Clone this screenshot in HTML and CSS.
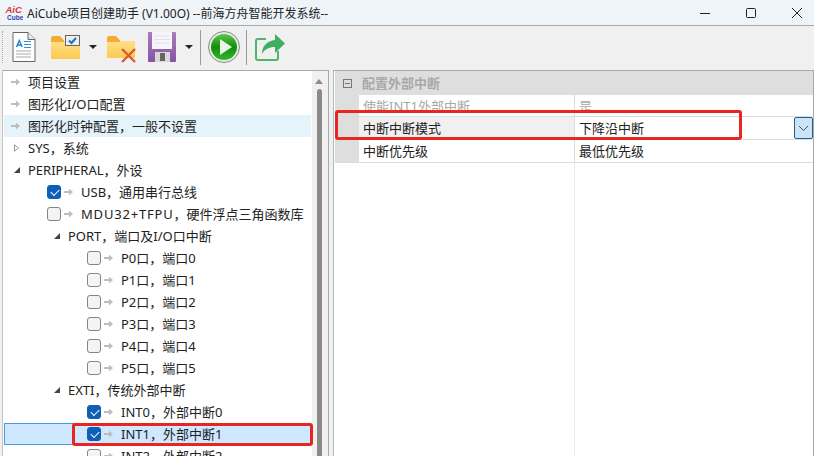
FILE: index.html
```html
<!DOCTYPE html>
<html lang="zh">
<head>
<meta charset="utf-8">
<title>AiCube</title>
<link rel="stylesheet" href="styles.css">
</head>
<body>
<div class="app">
  <header class="titlebar">
    <svg class="logo" width="18" height="18" viewBox="0 0 18 18"><text x="0.500" y="9" class="logo-a">AiC</text><text x="2" y="15.500" class="logo-b">Cube</text></svg>
    <span class="title">AiCube项目创建助手 (V1.00O) --前海方舟智能开发系统--</span>
    <div class="winbtns">
      <svg width="12" height="12" viewBox="0 0 12 12"><path d="M1 6.500h10" stroke="#222" fill="none"/></svg>
      <svg width="12" height="12" viewBox="0 0 12 12"><rect x="1.500" y="1.500" width="9" height="9" rx="1" stroke="#222" fill="none"/></svg>
      <svg width="12" height="12" viewBox="0 0 12 12"><path d="M1 1l10 10M11 1L1 11" stroke="#222" fill="none"/></svg>
    </div>
  </header>

  <div class="toolbar">
    <svg width="0" height="0" class="defs">
      <defs>
        <linearGradient id="fold" x1="0" y1="0" x2="0" y2="1"><stop offset="0" stop-color="#ffe08a"/><stop offset="1" stop-color="#fbc94f"/></linearGradient>
        <linearGradient id="ball" x1="0" y1="0" x2="0" y2="1"><stop offset="0" stop-color="#5cc84a"/><stop offset="0.500" stop-color="#128c0c"/><stop offset="1" stop-color="#35b82a"/></linearGradient>
        <linearGradient id="disk" x1="0" y1="0" x2="0" y2="1"><stop offset="0" stop-color="#a77cc0"/><stop offset="1" stop-color="#85559f"/></linearGradient>
      </defs>
    </svg>
    <div class="grip"></div>
    <svg class="t-doc" width="24" height="30" viewBox="0 0 24 30">
      <path d="M1 .5h15l7 7v22H1z" fill="#fff" stroke="#666"/><path d="M16 .5v7h7" fill="#e8e8e8" stroke="#666"/>
      <path d="M4.500 15l2.800-6.500 2.800 6.500M5.500 13h4" fill="none" stroke="#1f7fd6" stroke-width="1.400"/>
      <path d="M12 9.500h7M12 12.500h7M12 15.500h7" stroke="#3b8fdc"/><path d="M4 19h15M4 22h15M4 25h15" stroke="#a8a8a8"/>
    </svg>
    <svg class="t-folder1" width="29" height="24" viewBox="0 0 29 24">
      <path d="M0 6h29v17a1 1 0 01-1 1H1a1 1 0 01-1-1z" fill="url(#fold)"/><path d="M0 3a2 2 0 012-2h7l4 4.500V7H0z" fill="#f2ac36"/>
      <rect x="14.500" y=".5" width="14" height="10" fill="#eee" stroke="#666"/><path d="M18 5.500l2.500 2.500 4.500-5" stroke="#1a72c4" stroke-width="2" fill="none"/>
    </svg>
    <div class="caret c1"></div>
    <svg class="t-folder2" width="29" height="27" viewBox="0 0 29 27">
      <path d="M0 5h28v17H1a1 1 0 01-1-1z" fill="url(#fold)"/><path d="M0 2a2 2 0 012-2h7l4 4.500V6H0z" fill="#f2ac36"/>
      <path d="M15 13l13 13M28 13L15 26" stroke="#db5b30" stroke-width="2.400" fill="none"/>
    </svg>
    <svg class="t-save" width="30" height="30" viewBox="0 0 30 30">
      <path d="M1 1a1 1 0 011-1h26a1 1 0 011 1v28a1 1 0 01-1 1H2a1 1 0 01-1-1z" fill="url(#disk)"/>
      <rect x="5" y="0" width="20" height="17" fill="#f6f5fa"/><path d="M7 4h16M7 7.500h16M7 11h16" stroke="#e2e0ee"/>
      <rect x="8" y="20" width="15" height="10" fill="#d8d8d8"/><rect x="13" y="21" width="5" height="8" fill="#666"/>
    </svg>
    <div class="caret c2"></div>
    <div class="sep s1"></div>
    <svg class="t-play" width="32" height="32" viewBox="0 0 32 32">
      <circle cx="16" cy="16" r="15.500" fill="#e8ece8" stroke="#7f8f7f"/><circle cx="16" cy="16" r="13" fill="url(#ball)"/>
      <path d="M12 8l12 8-12 8z" fill="#e8f5e4"/>
    </svg>
    <div class="sep s2"></div>
    <svg class="t-share" width="30" height="27" viewBox="0 0 30 27">
      <path d="M11 5H3a2 2 0 00-2 2v17a2 2 0 002 2h18a2 2 0 002-2v-7" fill="none" stroke="#4fb56c" stroke-width="2"/>
      <path d="M20 0l10 9.500-10 9.500v-6c-6 0-10 2-13 7 0-8 5-13 13-14z" fill="#3fae60"/>
    </svg>
  </div>

  <main class="panels">
    <section class="tree-panel">
      <div class="tree">
        <div class="row lv0"><span class="leaf"></span><span class="label">项目设置</span></div>
        <div class="row lv0"><span class="leaf"></span><span class="label">图形化I/O口配置</span></div>
        <div class="row lv0 hover"><span class="leaf"></span><span class="label">图形化时钟配置&#xFF0C;一般不设置</span></div>
        <div class="row lv0"><span class="tri closed"></span><span class="label">SYS&#xFF0C;系统</span></div>
        <div class="row lv0"><span class="tri open"></span><span class="label">PERIPHERAL&#xFF0C;外设</span></div>
        <div class="row lv1"><span class="cb on"></span><span class="leaf"></span><span class="label">USB&#xFF0C;通用串行总线</span></div>
        <div class="row lv1"><span class="cb"></span><span class="leaf"></span><span class="label"><span class="wide">MDU32+TFPU</span>&#xFF0C;硬件浮点三角函数库</span></div>
        <div class="row lv2"><span class="tri open"></span><span class="label">PORT&#xFF0C;端口及I/O口中断</span></div>
        <div class="row lv3"><span class="cb"></span><span class="leaf"></span><span class="label">P0口&#xFF0C;端口0</span></div>
        <div class="row lv3"><span class="cb"></span><span class="leaf"></span><span class="label">P1口&#xFF0C;端口1</span></div>
        <div class="row lv3"><span class="cb"></span><span class="leaf"></span><span class="label">P2口&#xFF0C;端口2</span></div>
        <div class="row lv3"><span class="cb"></span><span class="leaf"></span><span class="label">P3口&#xFF0C;端口3</span></div>
        <div class="row lv3"><span class="cb"></span><span class="leaf"></span><span class="label">P4口&#xFF0C;端口4</span></div>
        <div class="row lv3"><span class="cb"></span><span class="leaf"></span><span class="label">P5口&#xFF0C;端口5</span></div>
        <div class="row lv2"><span class="tri open"></span><span class="label">EXTI&#xFF0C;传统外部中断</span></div>
        <div class="row lv3"><span class="cb on"></span><span class="leaf"></span><span class="label">INT0&#xFF0C;外部中断0</span></div>
        <div class="row lv3 selected"><span class="cb on"></span><span class="leaf"></span><span class="label">INT1&#xFF0C;外部中断1</span></div>
        <div class="row lv3"><span class="cb"></span><span class="leaf"></span><span class="label">INT2&#xFF0C;外部中断2</span></div>
      </div>
      <div class="scrollbar"><div class="sb-up"></div><div class="sb-thumb"></div></div>
    </section>

    <section class="props">
      <div class="group"><span class="minus"></span><span>配置外部中断</span></div>
      <div class="prop disabled"><div class="margin"></div><div class="name">使能INT1外部中断</div><div class="value">是</div></div>
      <div class="prop active"><div class="margin"></div><div class="name">中断中断模式</div><div class="value">下降沿中断<span class="dd"><svg width="11" height="7" viewBox="0 0 11 7"><path d="M1 1l4.500 4.500L10 1" fill="none" stroke="#44525f"/></svg></span></div></div>
      <div class="prop"><div class="margin"></div><div class="name">中断优先级</div><div class="value">最低优先级</div></div>
      <div class="prop-rest"><div class="rest-name"></div></div>
    </section>
  </main>

  <div class="mark mark-tree"></div>
  <div class="mark mark-prop"></div>
</div>
</body>
</html>
```

FILE: styles.css
```css
* { box-sizing: border-box; }
html, body { margin: 0; padding: 0; }
body { font-family: "Noto Sans", "Noto Sans CJK SC", sans-serif; font-size: 13px; color: #222; background: #f0f0f0; }
.app { position: relative; width: 814px; height: 456px; overflow: hidden; display: flex; flex-direction: column; }

.titlebar { height: 26px; flex: none; display: flex; align-items: center; background: #eff4f9; border-bottom: 1px solid #a9a9a9; padding-left: 5px; }
.logo { flex: none; }
.logo-a { font: italic 700 9.500px "Liberation Sans", sans-serif; fill: #d8383a; }
.logo-b { font: bold 6.500px "Liberation Sans", sans-serif; fill: #2a3fb0; }
.title { margin-left: 4px; font-size: 12px; color: #222; }
.winbtns { margin-left: auto; display: flex; gap: 34px; padding-right: 11px; }

.toolbar { height: 44px; flex: none; display: flex; align-items: center; padding: 0 0 2px 2px; background: #f0f0f0; }
.toolbar svg { flex: none; }
.defs { position: absolute; }
.grip { width: 1px; height: 32px; border-left: 1px dotted #aaa; flex: none; }
.t-doc { margin-left: 9px; }
.t-folder1 { margin-left: 15px; }
.caret { width: 0; height: 0; border: 4px solid transparent; border-top: 4px solid #222; border-bottom: 0; flex: none; }
.c1 { margin-left: 9px; }
.t-folder2 { margin-left: 10px; margin-top: 5px; }
.t-save { margin-left: 11px; }
.c2 { margin-left: 8px; }
.sep { width: 1px; height: 35px; background: #9a9a9a; flex: none; }
.s1 { margin-left: 7px; }
.t-play { margin-left: 7px; }
.s2 { margin-left: 6px; }
.t-share { margin-left: 8px; }

.panels { flex: 1; display: flex; min-height: 0; }
.tree-panel { width: 327px; margin-left: 2px; flex: none; display: flex; border-top: 1px solid #a9a9a9; border-left: 1px solid #c4c4c4; border-right: 1px solid #a9a9a9; background: #fff; overflow: hidden; }
.tree { flex: 1; min-width: 0; margin-left: 1px; margin-right: 1px; }
.row { height: 22px; display: flex; align-items: center; white-space: nowrap; }
.label { padding-bottom: 2px; }
.wide { letter-spacing: 0.800px; }
.row.hover { background: #e5f3fb; }
.row.selected { background: #cde8ff; box-shadow: inset 0 0 0 1px #4a9bd8; }
.lv0 { padding-left: 7px; }
.lv1 { padding-left: 43px; }
.lv2 { padding-left: 47px; }
.lv3 { padding-left: 83px; }
.leaf { width: 9px; height: 7px; flex: none; margin-right: 8px; background: #bdbdbd; clip-path: polygon(0 35%, 55% 35%, 55% 0, 100% 50%, 55% 100%, 55% 65%, 0 65%); }
.tri { width: 17px; height: 9px; flex: none; position: relative; }
.tri.closed::before { content: ""; position: absolute; left: 3px; top: 0; border: 4.500px solid transparent; border-left: 5px solid #9a9a9a; border-right: 0; }
.tri.closed::after { content: ""; position: absolute; left: 4px; top: 2px; border: 2.500px solid transparent; border-left: 3px solid #fff; border-right: 0; }
.tri.open::before { content: ""; position: absolute; left: 3px; top: 1px; border: 3px solid transparent; border-right-color: #444; border-bottom-color: #444; }
.cb { width: 14px; height: 14px; flex: none; margin-right: 3px; border-radius: 3px; border: 1px solid #858585; background: #f4f4f4; position: relative; }
.cb.on { background: #0f5fb8; border-color: #0f5fb8; }
.cb.on::after { content: ""; position: absolute; left: 2.500px; top: 2.500px; width: 7px; height: 4px; border-left: 1.500px solid #fff; border-bottom: 1.500px solid #fff; transform: rotate(-45deg); }

.scrollbar { width: 16px; flex: none; background: #f0f0f0; display: flex; flex-direction: column; align-items: center; padding: 8px 2px 0 0; gap: 5px; }
.sb-up { width: 0; height: 0; border: 4.500px solid transparent; border-bottom: 5px solid #8a8a8a; border-top: 0; }
.sb-thumb { width: 5px; flex: 1; background: #8a8a8a; border-radius: 3px 3px 0 0; }

.props { flex: 1; min-width: 0; margin-left: 4px; padding-left: 1px; border-top: 1px solid #a9a9a9; border-left: 1px solid #a9bccc; border-right: 1px solid #a9a9a9; background: #fff; display: flex; flex-direction: column; color: #222; }
.group { height: 24px; flex: none; background: #dedede; display: flex; align-items: center; gap: 10px; color: #a8a8a8; font-weight: 700; padding-left: 8px; }
.group span:last-child { padding-bottom: 2px; }
.minus { width: 9px; height: 9px; border: 1px solid #777; background: linear-gradient(#777,#777) center / 5px 1px no-repeat; flex: none; }
.prop { height: 23px; flex: none; display: flex; border-bottom: 1px solid #dcdcdc; }
.margin { width: 24px; flex: none; background: #dedede; }
.name { width: 216px; flex: none; padding-left: 4px; border-right: 1px solid #dcdcdc; line-height: 22px; }
.value { flex: 1; padding-left: 4px; line-height: 22px; display: flex; position: relative; }
.disabled { color: #a8a8a8; height: 22px; }
.active .name { background: #f0f0f0; }
.dd { position: absolute; right: 0; top: 0; width: 19px; height: 22px; background: #cce4f7; border: 1px solid #1c5f99; border-radius: 2px; display: flex; align-items: center; justify-content: center; }
.prop-rest { flex: 1; display: flex; }
.rest-name { width: 240px; border-right: 1px solid #ebebeb; }

.mark { position: absolute; border: 3px solid #e8261f; border-radius: 3px; pointer-events: none; }
.mark-tree { left: 72px; top: 423px; width: 241px; height: 23px; }
.mark-prop { left: 335px; top: 110px; width: 407px; height: 30px; }
```
